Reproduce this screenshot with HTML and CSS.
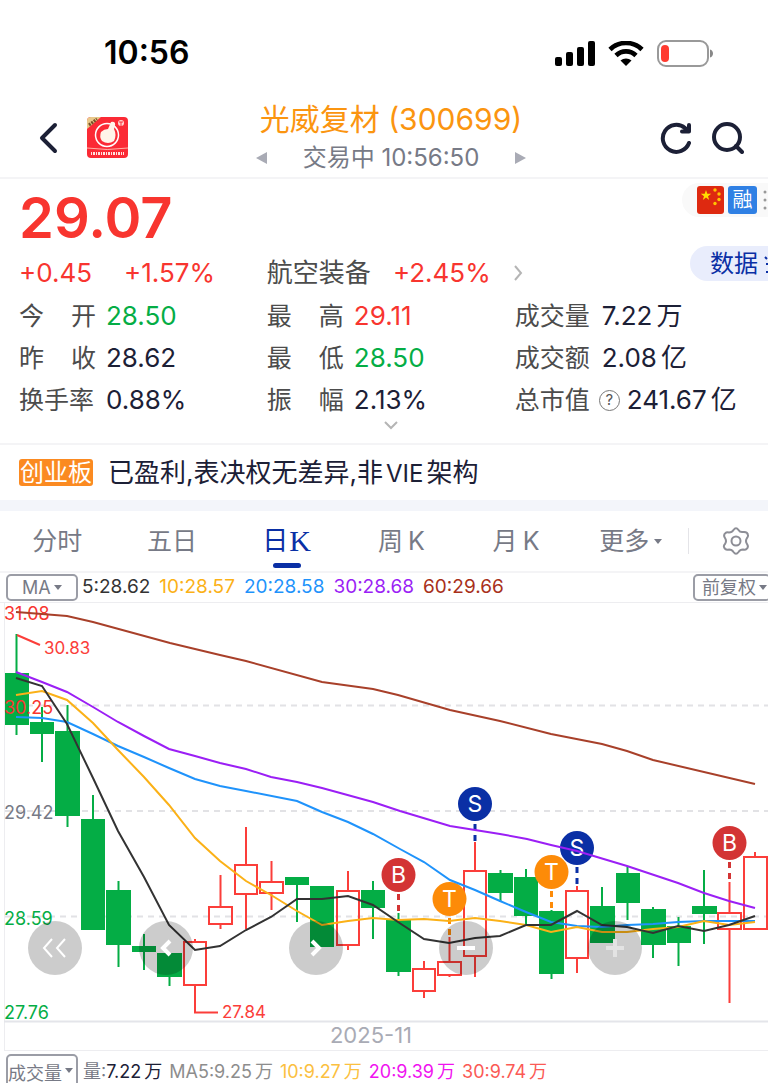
FILE: index.html
```html
<!DOCTYPE html>
<html lang="zh-CN">
  <head>
    <meta charset="UTF-8" />
    <meta name="viewport" content="width=device-width, initial-scale=1.0" />
    <title>光威复材 (300699)</title>
    <link rel="stylesheet" href="styles.css">
  </head>
  <body>
    <div class="status-bar">
      <span class="clock">10:56</span>
      <div class="status-icons">
        <svg width="40" height="26" viewBox="0 0 40 26">
          <rect x="0" y="16" width="7" height="9" rx="2" />
          <rect x="11" y="11" width="7" height="14" rx="2" />
          <rect x="22" y="6" width="7" height="19" rx="2" />
          <rect x="33" y="0" width="7" height="25" rx="2" />
        </svg>
        <svg width="36" height="26" viewBox="0 0 36 26">
          <path d="M2 8.5C11-.3 25-.3 34 8.500M8 14.500C13.500 9 22.500 9 28 14.500" fill="none" stroke="#000" stroke-width="4.600" />
          <path d="M12.500 19.500C15.500 16.700 20.500 16.700 23.500 19.500L18 25Z" />
        </svg>
        <svg width="58" height="28" viewBox="0 0 58 28">
          <rect x="1" y="1" width="50" height="25" rx="8" fill="none" stroke="#999" stroke-width="2" />
          <rect x="4" y="5" width="8" height="17" rx="4" fill="#ff3b30" />
          <path d="M53 9.500C57 10.500 57 16.500 53 17.500Z" fill="#888" />
        </svg>
      </div>
    </div>

    <header class="header">
      <div class="header-side">
        <button class="icon-btn" aria-label="返回">
          <svg width="20" height="32" viewBox="0 0 20 32"><path d="M17 3L4 16L17 29" class="stroke-dark" /></svg>
        </button>
        <svg class="logo" width="41" height="41" viewBox="0 0 41 41">
          <defs><clipPath id="logoClip"><rect width="41" height="41" rx="4" /></clipPath></defs>
          <g clip-path="url(#logoClip)">
            <rect width="41" height="41" fill="#fb2a35" />
            <path d="M0 0H14L0 12Z" fill="#e9c98b" />
            <path d="M2 8L10 2" stroke="#755028" stroke-width="3" stroke-dasharray="2 1" />
            <circle cx="20" cy="18" r="11.500" fill="none" stroke="#fff" stroke-width="1.500" />
            <path d="M14 15Q17 12 21 12L24 5Q29 4 28 9L27 12Q30 18 27 24Q21 28 15 24Q12 20 14 15Z" fill="#fff4e9" />
            <circle cx="34" cy="6" r="3" fill="#ffd6d0" />
            <path d="M32 5H36M34 5V9" stroke="#fb2a35" />
            <path d="M0 31Q20 34 41 31" stroke="#ffb1a5" fill="none" />
            <path d="M4 36.500H37" stroke="#ffe3df" stroke-width="3" stroke-dasharray="1 1 2 1" />
          </g>
        </svg>
      </div>
      <div class="header-title">
        <h1>光威复材 (300699)</h1>
        <div class="session">
          <button class="icon-btn" aria-label="上一只"><svg width="11" height="14" viewBox="0 0 11 14"><path d="M11 1V13L0 7Z" fill="#a9abb5" /></svg></button>
          <span>交易中 10:56:50</span>
          <button class="icon-btn" aria-label="下一只"><svg width="11" height="14" viewBox="0 0 11 14"><path d="M0 1V13L11 7Z" fill="#a9abb5" /></svg></button>
        </div>
      </div>
      <div class="header-side header-right">
        <button class="icon-btn" aria-label="刷新">
          <svg width="32" height="32" viewBox="0 0 32 32"><path d="M29 21A13.500 13.500 0 1 1 25 6L28 9M29 3V9.500H22" class="stroke-dark" /></svg>
        </button>
        <button class="icon-btn" aria-label="搜索">
          <svg width="32" height="32" viewBox="0 0 32 32"><circle cx="15" cy="15" r="13" class="stroke-dark" /><path d="M24 24L30 30" class="stroke-dark" /></svg>
        </button>
      </div>
    </header>

    <section class="quote">
      <div class="summary">
        <div class="price">29.07</div>
        <div class="change"><span>+0.45</span><span>+1.57%</span></div>
        <a class="sector" href="#">
          <span>航空装备</span>
          <span class="up">+2.45%</span>
          <svg width="10" height="16" viewBox="0 0 10 16"><path d="M2 1L8 8L2 15" fill="none" stroke="#b5b5b5" stroke-width="2" /></svg>
        </a>
        <div class="side">
          <div class="marks">
            <svg width="27" height="28" viewBox="0 0 27 28">
              <rect width="27" height="28" rx="3" fill="#de2910" />
              <path d="M9 4L10.300 7.800H14.200L11 10.200L12.200 14L9 11.600L5.800 14L7 10.200L3.800 7.800H7.700Z" fill="#ffde00" />
              <g fill="#ffc400"><circle cx="18" cy="4" r="1.700" /><circle cx="22" cy="8" r="1.700" /><circle cx="22" cy="13.500" r="1.700" /><circle cx="18" cy="17.500" r="1.700" /></g>
            </svg>
            <span class="margin-mark">融</span>
            <svg width="6" height="20" viewBox="0 0 6 20" fill="#999"><circle cx="3" cy="2" r="1.500" /><circle cx="3" cy="10" r="1.500" /><circle cx="3" cy="18" r="1.500" /></svg>
          </div>
          <button class="data-btn">数据
            <svg width="6" height="22" viewBox="0 0 6 22"><path d="M3 3L5 5M4 10H6M4 18H6" stroke="#0a2fa5" stroke-width="2" /></svg>
          </button>
        </div>
      </div>

      <dl class="stats">
        <div><dt>今<i></i>开</dt><dd class="down">28.50</dd></div>
        <div><dt>最<i></i>高</dt><dd class="up">29.11</dd></div>
        <div><dt>成交量</dt><dd>7.22<span class="unit">万</span></dd></div>
        <div><dt>昨<i></i>收</dt><dd>28.62</dd></div>
        <div><dt>最<i></i>低</dt><dd class="down">28.50</dd></div>
        <div><dt>成交额</dt><dd>2.08<span class="unit">亿</span></dd></div>
        <div><dt>换手率</dt><dd>0.88%</dd></div>
        <div><dt>振<i></i>幅</dt><dd>2.13%</dd></div>
        <div class="with-help"><dt>总市值</dt><button class="help" aria-label="说明">?</button><dd>241.67<span class="unit">亿</span></dd></div>
      </dl>
      <button class="icon-btn expand" aria-label="展开">
        <svg width="14" height="9" viewBox="0 0 14 9"><path d="M1 1L7 7L13 1" fill="none" stroke="#b5b5b5" stroke-width="2" /></svg>
      </button>
    </section>

    <div class="notice">
      <span class="board">创业板</span>
      <span>已盈利,表决权无差异,非<span class="latin">VIE</span>架构</span>
    </div>

    <nav class="tabs">
      <button class="tab">分时</button>
      <button class="tab">五日</button>
      <button class="tab active">日<b>K</b></button>
      <button class="tab">周<span>K</span></button>
      <button class="tab">月<span>K</span></button>
      <button class="tab">更多<span class="caret"></span></button>
      <button class="tab settings" aria-label="设置">
        <svg width="28" height="28" viewBox="0 0 28 28" fill="none" stroke="#8d8e96" stroke-width="2" stroke-linejoin="round">
          <path d="M11.500 3Q14 -.5 16.500 3Q18 5.500 21 5Q25.500 4.500 26 8Q26.300 9.500 25 11Q23 14 25 17Q27 20 24.500 22Q23.500 23 21 22.500Q18 22.500 16.500 25Q14 28.500 11.500 25Q10 22.500 7 22.500Q3 23.500 2 20Q1.500 18.500 3 17Q5 14 3 11Q1 8 3.500 6Q4.500 5 7 5.500Q10 5.500 11.500 3Z" />
          <circle cx="14" cy="14" r="4.500" />
        </svg>
      </button>
    </nav>

    <div class="indicators">
      <label class="picker">
        <select aria-label="指标"><option>MA</option></select>
        <span class="caret"></span>
      </label>
      <span class="ma5">5:28.62</span>
      <span class="ma10">10:28.57</span>
      <span class="ma20">20:28.58</span>
      <span class="ma30">30:28.68</span>
      <span class="ma60">60:29.66</span>
      <label class="picker adjust">
        <select aria-label="复权"><option>前复权</option></select>
        <span class="caret"></span>
      </label>
    </div>

    <div class="chart">
      <svg class="plot" viewBox="0 602 768 449">
        <path class="frame" d="M4.500 602V1050.500M0 602.500H768M4 1050.500H768" />
        <path class="frame strong" d="M4 1021.500H768" />
        <path class="grid" d="M5 705.500H768M5 811H768M5 916.500H768" />

        <path class="wick down-line" d="M16.500 634V735M42 707V762M67.500 705V827M93 795V900M118.500 881V967M144 934V970M169.500 960V986M297 877V922M373 881V939M398.500 913V976M500.500 870V902M526 869V924M551.500 910V979M602 887V920M627.500 867V920M653 907V958M678.500 917V966M704 870V944" />
        <g class="down-body">
          <rect x="5" y="673" width="24" height="52" />
          <rect x="30" y="722" width="24" height="12" />
          <rect x="55" y="731" width="25" height="85" />
          <rect x="81" y="819" width="24" height="111" />
          <rect x="106" y="890" width="25" height="55" />
          <rect x="132" y="946" width="24" height="6" />
          <rect x="157" y="953" width="25" height="24" />
          <rect x="285" y="877" width="24" height="8" />
          <rect x="310" y="886" width="24" height="61" />
          <rect x="361" y="890" width="24" height="18" />
          <rect x="386" y="920" width="25" height="52" />
          <rect x="488" y="873" width="25" height="20" />
          <rect x="514" y="877" width="24" height="39" />
          <rect x="539" y="911" width="25" height="63" />
          <rect x="590" y="906" width="25" height="37" />
          <rect x="616" y="873" width="24" height="30" />
          <rect x="641" y="909" width="25" height="36" />
          <rect x="667" y="926" width="24" height="17" />
          <rect x="692" y="906" width="25" height="8" />
        </g>
        <path class="wick up-line" d="M195 939V941M195 986V1012.500H218M220.500 875V906M220.500 924V929M246 827V865M246 895V929M271.500 861V881M271.500 893V910M348 871V890M348 946V950M424 961V968M424 992V998M449.500 937V961M449.500 975V977M475 842V870M475 957V977M577 886V890M577 959V973M729.500 882V912M729.500 929V1003M755 852V856M17 635L40 645" />
        <g class="up-body">
          <rect x="184" y="942" width="22" height="43" />
          <rect x="209" y="907" width="23" height="17" />
          <rect x="235" y="865" width="22" height="29" />
          <rect x="260" y="882" width="23" height="11" />
          <rect x="337" y="891" width="22" height="54" />
          <rect x="413" y="969" width="22" height="22" />
          <rect x="438" y="962" width="23" height="13" />
          <rect x="464" y="871" width="22" height="85" />
          <rect x="566" y="891" width="22" height="67" />
          <rect x="718" y="913" width="23" height="16" />
          <rect x="744" y="857" width="23" height="72" />
        </g>

        <g class="axis">
          <text x="4" y="620" class="up">31.08</text>
          <text x="4" y="714" class="up">30.25</text>
          <text x="4" y="819">29.42</text>
          <text x="4" y="925" class="down">28.59</text>
          <text x="4" y="1019" class="down">27.76</text>
        </g>
        <g class="extreme">
          <text x="44" y="654">30.83</text>
          <text x="222" y="1018">27.84</text>
        </g>
        <text x="371" y="1043" class="date">2025-11</text>

        <g class="signal buy">
          <path d="M398.500 894V912" /><circle cx="398.500" cy="875" r="17" /><text x="398.500" y="883">B</text>
          <path d="M729.500 862V880" /><circle cx="729.500" cy="843" r="17" /><text x="729.500" y="851">B</text>
        </g>
        <g class="signal trade">
          <path d="M449.500 918V936" /><circle cx="449.500" cy="899" r="17" /><text x="449.500" y="907">T</text>
          <path d="M551.500 891V909" /><circle cx="551.500" cy="872" r="17" /><text x="551.500" y="880">T</text>
        </g>
        <g class="signal sell">
          <path d="M475 824V842" /><circle cx="475" cy="804" r="17" /><text x="475" y="812">S</text>
          <path d="M577 867V885" /><circle cx="577" cy="848" r="17" /><text x="577" y="856">S</text>
        </g>

        <g class="lines">
          <polyline stroke="#a8402a" points="16,612 42,614 67,616 93,622 170,643 220,655 246,661 322,682 373,689 398,695 450,710 500,721 551,734 602,744 627,751 653,760 755,784" />
          <polyline stroke="#9b1ff5" points="16,672 42,682 67,692 93,707 118,722 144,736 169,749 195,756 220,763 246,769 271,777 297,782 322,788 373,802 400,811 450,826 475,830 500,834 527,839 551,845 577,851 627,866 678,883 704,893 729,901 755,908" />
          <polyline stroke="#1f93fb" points="16,717 42,718 67,722 93,734 118,746 144,757 169,768 195,779 220,786 246,791 297,801 322,812 348,822 373,834 400,849 424,862 450,880 475,890 500,901 526,912 551,922 577,926 602,927 627,925 653,924 678,922 704,921 755,921" />
          <polyline stroke="#fbb117" points="16,695 42,691 67,700 93,723 118,750 144,777 169,805 195,838 220,861 246,881 271,895 297,911 322,925 348,921 373,918 398,920 424,919 449,921 475,918 500,921 526,925 551,932 577,927 602,932 627,932 653,929 678,927 704,921 729,925 755,922" />
          <polyline stroke="#333" points="16,678 42,686 67,724 93,778 118,831 144,877 169,925 195,950 220,946 246,930 271,917 297,899 322,899 348,896 373,905 398,922 424,939 449,943 475,938 500,936 526,925 551,925 577,911 602,925 627,927 653,933 678,926 704,931 729,925 755,916" />
        </g>
      </svg>
      <div class="chart-tools">
        <button aria-label="最早" class="thin"><svg width="54" height="54" viewBox="0 0 54 54"><path d="M24 18L16 27L24 36M37 18L29 27L37 36" /></svg></button>
        <button aria-label="左移"><svg width="54" height="54" viewBox="0 0 54 54"><path d="M31 20L24 27L31 34" /></svg></button>
        <button aria-label="右移"><svg width="54" height="54" viewBox="0 0 54 54"><path d="M23 20L30 27L23 34" /></svg></button>
        <button aria-label="缩小"><svg width="54" height="54" viewBox="0 0 54 54"><path d="M18 27H36" /></svg></button>
        <button aria-label="放大" disabled><svg width="54" height="54" viewBox="0 0 54 54"><path d="M18 27H36M27 18V36" /></svg></button>
      </div>
    </div>

    <div class="indicators volume">
      <label class="picker">
        <select aria-label="副图"><option>成交量</option></select>
        <span class="caret"></span>
      </label>
      <span class="vol"><em>量:</em>7.22<span class="unit">万</span></span>
      <span class="vma5">MA5:9.25<span class="unit">万</span></span>
      <span class="vma10">10:9.27<span class="unit">万</span></span>
      <span class="vma20">20:9.39<span class="unit">万</span></span>
      <span class="vma30">30:9.74<span class="unit">万</span></span>
    </div>
  </body>
</html>
```

FILE: styles.css
```css
* {
  box-sizing: border-box;
}
body {
  margin: 0;
  background: #fff;
  color: #1c2036;
  font-family: Inter, "Noto Sans CJK SC", sans-serif;
  font-size: 26px;
  line-height: 1.2;
  overflow-x: hidden;
}
button,
select {
  font: inherit;
  color: inherit;
  background: none;
  border: none;
  padding: 0;
  margin: 0;
}
svg {
  display: block;
  flex: none;
}
.up {
  color: #f8352f;
  fill: #f8352f;
}
.down {
  color: #04ad45;
  fill: #04ad45;
}
.unit {
  margin-left: 4px;
}
.stroke-dark {
  fill: none;
  stroke: #1c2036;
  stroke-width: 4;
  stroke-linecap: round;
  stroke-linejoin: round;
}
.caret {
  border: 4px solid transparent;
  border-top: 5px solid #777a86;
  border-bottom: 0;
}

/* status bar */
.status-bar {
  display: flex;
  justify-content: space-between;
  align-items: center;
  height: 98px;
  padding: 9px 53px 0 104px;
}
.clock {
  color: #000;
  font-size: 32px;
  font-weight: 600;
}
.status-icons {
  display: flex;
  align-items: center;
  gap: 13px;
}

/* header */
.header {
  display: grid;
  grid-template-columns: 1fr auto 1fr;
  align-items: center;
  height: 81px;
  padding: 0 24px 0 38px;
  border-bottom: 2px solid #f4f4f6;
}
.header-side {
  display: flex;
  align-items: center;
  gap: 29px;
}
.header-right {
  justify-content: flex-end;
  gap: 20px;
}
.header-title {
  text-align: center;
}
h1 {
  margin: 0;
  color: #fb9510;
  font-size: 30px;
  font-weight: 400;
  line-height: 40px;
}
.session {
  display: flex;
  justify-content: center;
  align-items: center;
  gap: 36px;
  color: #777a86;
  font-size: 24px;
  line-height: 38px;
}

/* quote */
.quote {
  padding: 4px 20px 0 19px;
  border-bottom: 2px solid #f4f4f6;
}
.summary,
.stats {
  display: grid;
  grid-template-columns: 34% 34% 1fr;
}
.summary {
  grid-template-rows: 67px 45px;
}
.price {
  grid-column: 1 / 3;
  color: #f8352f;
  font-size: 56px;
  font-weight: 600;
  line-height: 70px;
}
.change {
  display: flex;
  align-items: center;
  gap: 32px;
  color: #f8352f;
}
.sector {
  display: flex;
  align-items: center;
  gap: 22px;
  color: #4c4c4c;
  text-decoration: none;
  white-space: nowrap;
}
.side {
  grid-column: 3;
  grid-row: 1 / 3;
  display: flex;
  flex-direction: column;
  align-items: flex-end;
  gap: 29px;
  margin-right: -20px;
}
.marks {
  display: flex;
  align-items: center;
  gap: 4px;
  height: 34px;
  padding-left: 15px;
  border-radius: 17px 0 0 17px;
  background: #f9f9f9;
}
.margin-mark {
  width: 29px;
  margin-right: 1px;
  border-radius: 3px;
  background: #2f80e4;
  color: #fff;
  font-size: 20px;
  line-height: 28px;
  text-align: center;
}
.data-btn {
  display: flex;
  align-items: center;
  gap: 4px;
  height: 35px;
  padding: 2px 0 0 20px;
  border-radius: 18px 0 0 18px;
  background: #e9edfc;
  color: #0a2fa5;
  font-size: 24px;
}
.stats {
  margin: 0;
}
.stats div {
  display: flex;
  align-items: center;
  gap: 10px;
  height: 42px;
  white-space: nowrap;
}
.stats .with-help {
  gap: 7px;
}
.stats dt {
  display: flex;
  justify-content: space-between;
  width: 77px;
  color: #4c4c4c;
  font-size: 25px;
}
.stats dd {
  margin: 0;
}
.help {
  width: 21px;
  height: 21px;
  border: 1px solid #777;
  border-radius: 50%;
  color: #555;
  font-size: 15px;
  line-height: 18px;
}
.expand {
  display: block;
  margin: 0 auto;
  padding: 0 0 13px 14px;
}

/* listing notice */
.notice {
  display: flex;
  align-items: center;
  gap: 15px;
  height: 66px;
  padding: 0 19px;
  border-bottom: 11px solid #f3f5fa;
}
.board {
  padding: 0 1px;
  border-radius: 3px;
  background: #fb8a21;
  color: #fff;
  font-size: 24px;
  line-height: 27px;
}
.latin {
  margin: 0 3px;
  font-size: 24px;
}

/* period tabs */
.tabs {
  display: flex;
  height: 62px;
  border-bottom: 2px solid #f4f4f6;
}
.tab {
  position: relative;
  display: flex;
  flex: 1;
  justify-content: center;
  align-items: center;
  gap: 5px;
  color: #777a86;
  font-size: 25px;
}
.tab.active {
  gap: 1px;
  color: #0a2fa5;
  font-size: 26px;
}
.tab b {
  font-family: "Liberation Serif", serif;
  font-size: 30px;
  font-weight: 400;
}
.tab.active::after {
  content: "";
  position: absolute;
  bottom: 3px;
  width: 28px;
  height: 5px;
  border-radius: 3px;
  background: #0a2fa5;
}
.tab.settings {
  flex: 0 0 80px;
  padding-left: 16px;
}
.settings::before {
  content: "";
  position: absolute;
  left: 0;
  width: 1px;
  height: 26px;
  background: #e4e4e8;
}

/* indicator rows */
.indicators {
  display: flex;
  align-items: center;
  gap: 9px;
  height: 29px;
  padding-left: 6px;
  font-size: 19px;
  white-space: nowrap;
}
.picker {
  position: relative;
  flex: none;
  width: 72px;
  height: 27px;
  margin-right: -5px;
  border: 2px solid #9b9da6;
  border-radius: 5px;
  color: #777a86;
  font-size: 18px;
}
.picker select {
  display: block;
  width: 100%;
  height: 100%;
  padding: 0 0 0 14px;
  appearance: none;
}
.picker .caret {
  position: absolute;
  right: 14px;
  top: 9px;
  pointer-events: none;
}
.adjust {
  width: 78px;
  margin-left: auto;
  margin-right: -3px;
}
.adjust select {
  padding-left: 7px;
}
.adjust .caret {
  right: 2px;
}
.ma5 { color: #333; }
.ma10 { color: #fbb117; }
.ma20 { color: #1f93fb; }
.ma30 { color: #9b1ff5; }
.ma60 { color: #a8301a; }

.volume {
  align-items: flex-start;
  gap: 7px;
  height: 32px;
  padding-top: 3px;
  font-size: 18px;
  line-height: 36px;
  overflow: hidden;
}
.volume .picker {
  height: 34px;
  margin-right: -2px;
}
.volume select {
  height: 28px;
  padding: 0;
}
.volume .picker .caret {
  right: 3px;
  top: 12px;
}
.volume em {
  color: #777a86;
  font-style: normal;
}
.volume .unit {
  margin-left: 3px;
}
.vma5 { color: #8d8d8d; }
.vma10 { color: #fbc040; }
.vma20 { color: #f013f0; }
.vma30 { color: #fb5a55; }

/* k-line chart */
.chart {
  position: relative;
}
.plot {
  width: 100%;
}
.plot text {
  font-size: 18px;
}
.frame {
  fill: none;
  stroke: #ededf0;
}
.strong {
  stroke: #e4e5ea;
  stroke-width: 2;
}
.grid {
  stroke: #e2e2e5;
  stroke-width: 2;
  stroke-dasharray: 6 5;
}
.wick {
  fill: none;
  stroke-width: 2;
}
.down-line { stroke: #04ad45; }
.up-line { stroke: #fb3e3a; }
.down-body { fill: #04ad45; }
.up-body {
  fill: none;
  stroke: #fb3e3a;
  stroke-width: 2;
}
.axis { fill: #777a86; }
.plot .extreme text {
  fill: #fb3e3a;
  font-size: 17px;
}
.plot .date {
  fill: #a9abb5;
  font-size: 22px;
  text-anchor: middle;
}
.signal path {
  stroke-width: 3;
  stroke-dasharray: 6 5;
}
.plot .signal text {
  fill: #fff;
  stroke: none;
  font-size: 23px;
  text-anchor: middle;
}
.buy { fill: #d33434; stroke: #d33434; }
.trade { fill: #fd8b08; stroke: #fd8b08; }
.sell { fill: #0a2fa5; stroke: #0a2fa5; }
.signal circle { stroke: none; }
.lines {
  fill: none;
  stroke-width: 2;
}
.chart-tools button {
  position: absolute;
  top: 71%;
  border-radius: 50%;
  background: rgba(0, 0, 0, 0.2);
}
.chart-tools path {
  fill: none;
  stroke: #fff;
  stroke-width: 4;
}
.chart-tools .thin path { stroke-width: 2; }
.chart-tools button:nth-child(1) { left: 3.6%; }
.chart-tools button:nth-child(2) { left: 18.1%; }
.chart-tools button:nth-child(3) { left: 37.6%; }
.chart-tools button:nth-child(4) { left: 57.1%; }
.chart-tools button:nth-child(5) { left: 76.6%; }
.chart-tools button:disabled path { stroke: #e3e3e3; }
```
